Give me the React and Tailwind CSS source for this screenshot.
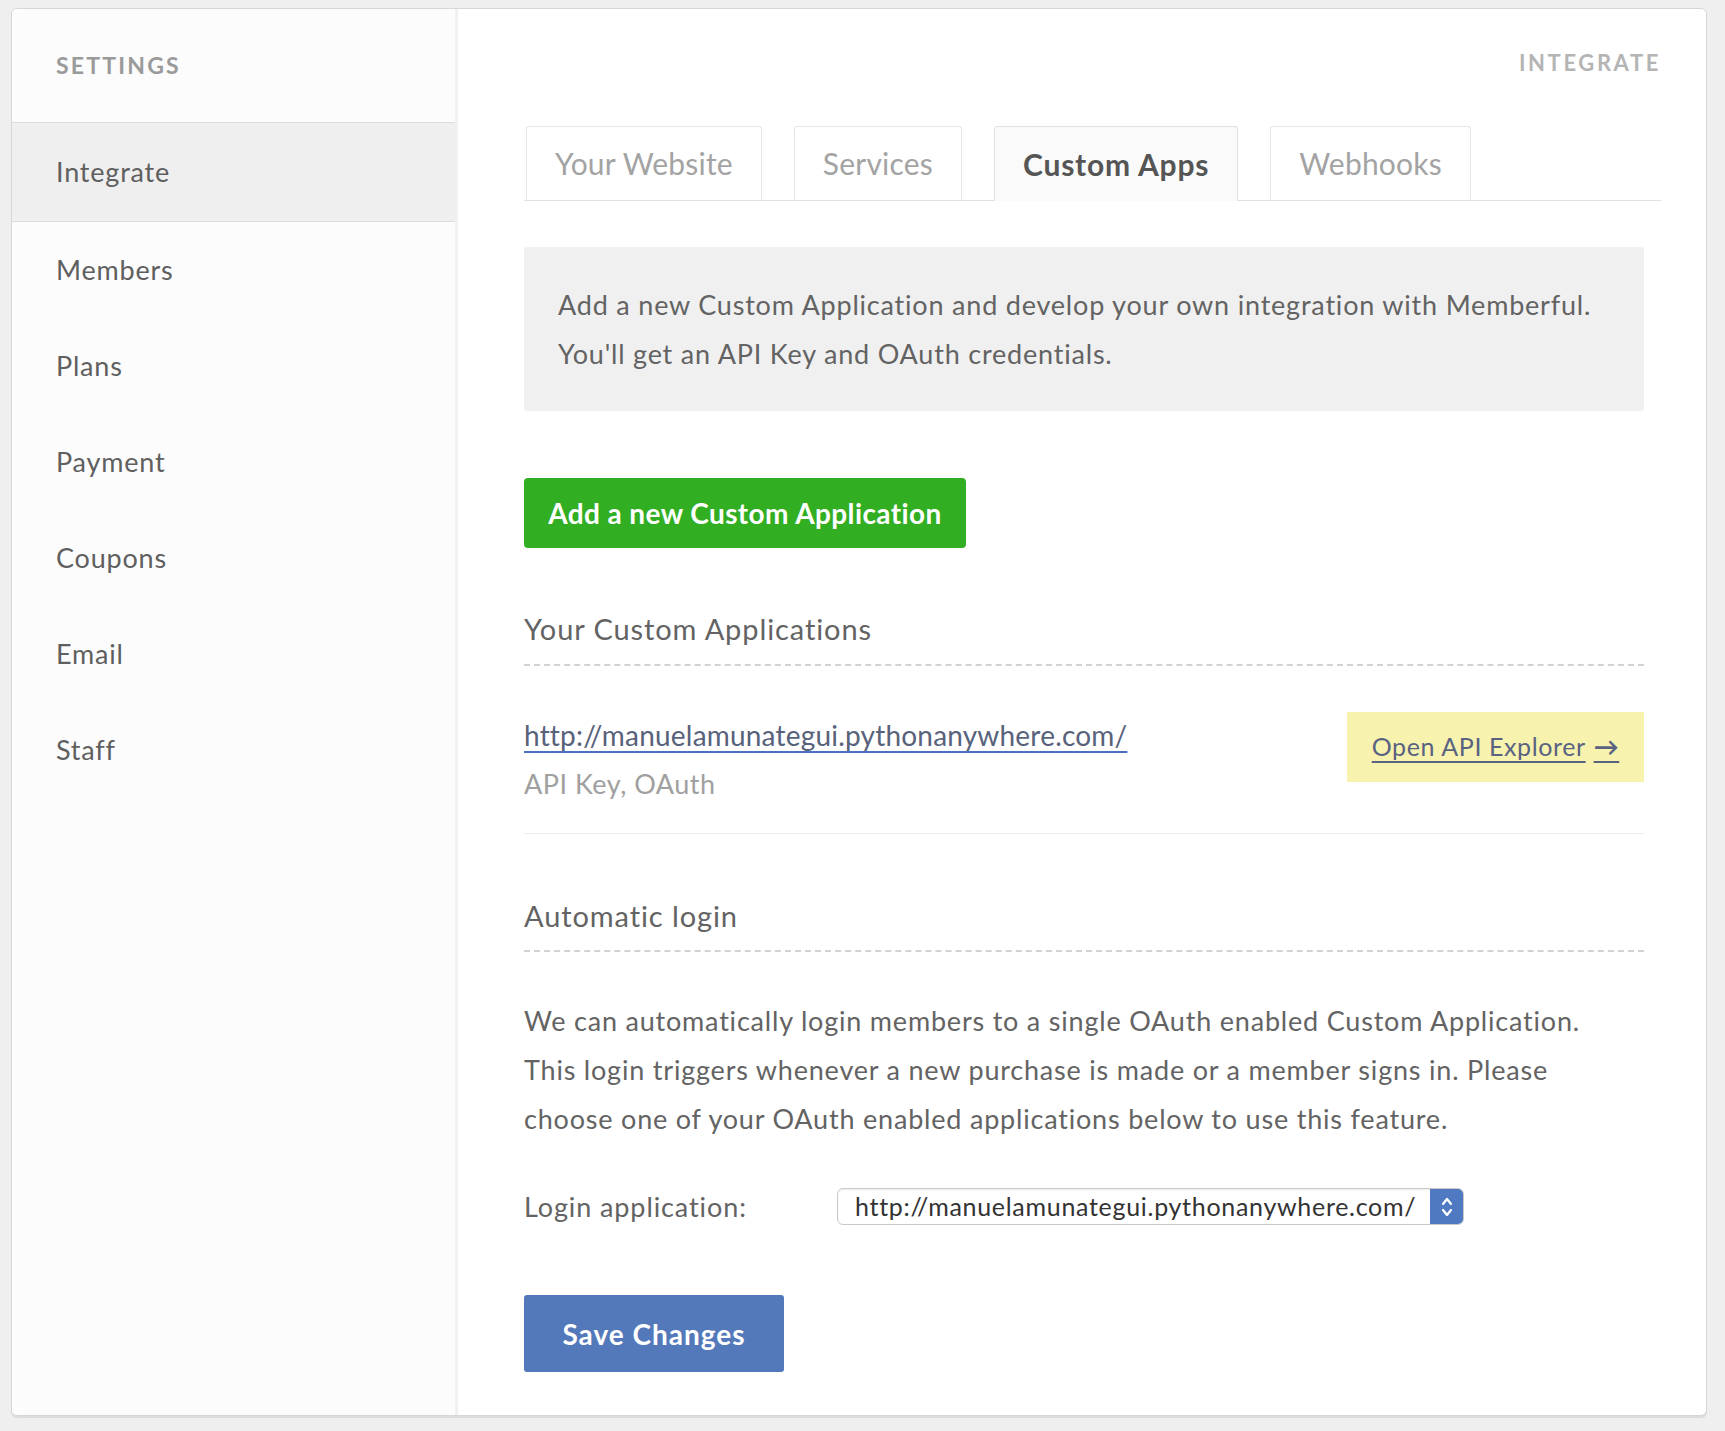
import React from 'react';

const navItems = ['Members', 'Plans', 'Payment', 'Coupons', 'Email', 'Staff'];
const tabs = ['Your Website', 'Services', 'Custom Apps', 'Webhooks'];
const appUrl = 'http://manuelamunategui.pythonanywhere.com/';

const App = () => {
  return (
    <div
      className="min-h-screen bg-[#efefef] pl-[11px] pt-[8px] pr-[18px] pb-[15px]"
      style={{ fontFamily: 'Lato, "Liberation Sans", sans-serif' }}
    >
      <div className="flex h-[1408px] w-[1696px] overflow-hidden rounded-md border border-[#d6d6d6] bg-white shadow-[0_2px_0_#dcdcdc]">
        {/* Sidebar */}
        <aside className="w-[446px] shrink-0 border-r-[3px] border-[#f1f1f1] bg-[#fcfcfc]">
          <div className="flex h-[114px] items-center border-b border-[#dddddd] pl-[44px]">
            <span className="text-[23px] font-bold tracking-[2.2px] text-[#9a9a9a]">SETTINGS</span>
          </div>
          <div className="flex h-[99px] items-center border-b border-[#dddddd] bg-[#efefef] pl-[44px]">
            <span className="text-[27px] tracking-[0.8px] text-[#5f5f5f]">Integrate</span>
          </div>
          {navItems.map((item) => (
            <div key={item} className="flex h-[96px] items-center pl-[44px]">
              <span className="text-[27px] tracking-[0.8px] text-[#5f5f5f]">{item}</span>
            </div>
          ))}
        </aside>

        {/* Main */}
        <main className="flex-1 pl-[66px] pr-[45px]">
          <div className="flex justify-end pt-[40px]">
            <span className="text-[22px] font-bold leading-[28px] tracking-[2.6px] text-[#b4b4b4]">INTEGRATE</span>
          </div>

          {/* Tabs */}
          <div className="mt-[50px] flex h-[74px] items-end gap-8 border-b border-[#e2e2e2] pl-[2px]">
            {tabs.map((tab) =>
              tab === 'Custom Apps' ? (
                <div
                  key={tab}
                  className="-mb-px flex h-[75px] items-center rounded-t-[3px] border border-b-0 border-[#e2e2e2] bg-[#fafafa] px-7 text-[30px] font-bold tracking-[0.8px] text-[#555555]"
                >
                  {tab}
                </div>
              ) : (
                <div
                  key={tab}
                  className="flex h-[74px] items-center rounded-t-[3px] border border-b-0 border-[#e6e6e6] px-7 text-[30px] tracking-[0.2px] text-[#a3a3a3]"
                >
                  {tab}
                </div>
              )
            )}
          </div>

          <div className="w-[1120px]">
            {/* Info box */}
            <div className="mt-[46px] rounded-[3px] bg-[#f0f0f0] px-[34px] py-[33px] text-[27px] leading-[49px] tracking-[0.8px] text-[#636363]">
              <p>Add a new Custom Application and develop your own integration with Memberful.</p>
              <p>You'll get an API Key and OAuth credentials.</p>
            </div>

            <button className="mt-[67px] flex h-[70px] w-[442px] items-center justify-center rounded-[4px] bg-[#32ae22] text-[28px] font-bold tracking-[0.4px] text-white">
              Add a new Custom Application
            </button>

            {/* Your Custom Applications */}
            <h2 className="mt-[63px] border-b-2 border-dashed border-[#d2d2d2] pb-[17px] text-[29px] leading-[36px] tracking-[0.9px] text-[#636363]">
              Your Custom Applications
            </h2>

            <div className="flex items-start justify-between border-b border-[#ececec] pb-[29px] pt-[46px]">
              <div className="pt-[2px]">
                <a
                  href="#"
                  className="block text-[28px] leading-[42px] tracking-[0.2px] text-[#58627a] underline decoration-[#4a72c0] decoration-2 underline-offset-[5px]"
                >
                  {appUrl}
                </a>
                <div className="mt-[8px] text-[27px] leading-[40px] tracking-[0.5px] text-[#a0a0a0]">API Key, OAuth</div>
              </div>
              <a
                href="#"
                className="flex h-[70px] w-[297px] items-center justify-center bg-[#f7f3ae] text-[25px] tracking-[0.6px] text-[#5a6282] underline decoration-[#5a6282] underline-offset-[5px]"
              >
                Open API Explorer <span className="ml-[8px] font-bold">→</span>
              </a>
            </div>

            {/* Automatic login */}
            <h2 className="mt-[64px] border-b-2 border-dashed border-[#d2d2d2] pb-[16px] text-[29px] leading-[36px] tracking-[0.9px] text-[#636363]">
              Automatic login
            </h2>

            <p className="mt-[44px] text-[27px] leading-[49px] tracking-[0.8px] text-[#636363]">
              We can automatically login members to a single OAuth enabled Custom Application.
              <br />
              This login triggers whenever a new purchase is made or a member signs in. Please
              <br />
              choose one of your OAuth enabled applications below to use this feature.
            </p>

            <div className="mt-[45px] flex items-center">
              <span className="w-[313px] text-[27px] leading-[37px] tracking-[0.9px] text-[#636363]">Login application:</span>
              <div className="flex h-[37px] w-[627px] items-stretch overflow-hidden rounded-[6px] border border-[#c9c9c9] bg-white shadow-[inset_0_1px_2px_rgba(0,0,0,0.08)]">
                <span className="flex flex-1 items-center pl-[17px] text-[25px] tracking-[0.7px] text-[#333333]">{appUrl}</span>
                <span className="flex w-[33px] items-center justify-center bg-[#4f79c0]">
                  <svg width="14" height="24" viewBox="0 0 14 24" fill="none" stroke="white" strokeWidth="2.2" strokeLinecap="round" strokeLinejoin="round">
                    <path d="M3 9 L7 4 L11 9" />
                    <path d="M3 15 L7 20 L11 15" />
                  </svg>
                </span>
              </div>
            </div>

            <button className="mt-[70px] flex h-[77px] w-[260px] items-center justify-center rounded-[3px] bg-[#5479ba] text-[28px] font-bold tracking-[1px] text-white">
              Save Changes
            </button>
          </div>
        </main>
      </div>
    </div>
  );
};

export default App;
